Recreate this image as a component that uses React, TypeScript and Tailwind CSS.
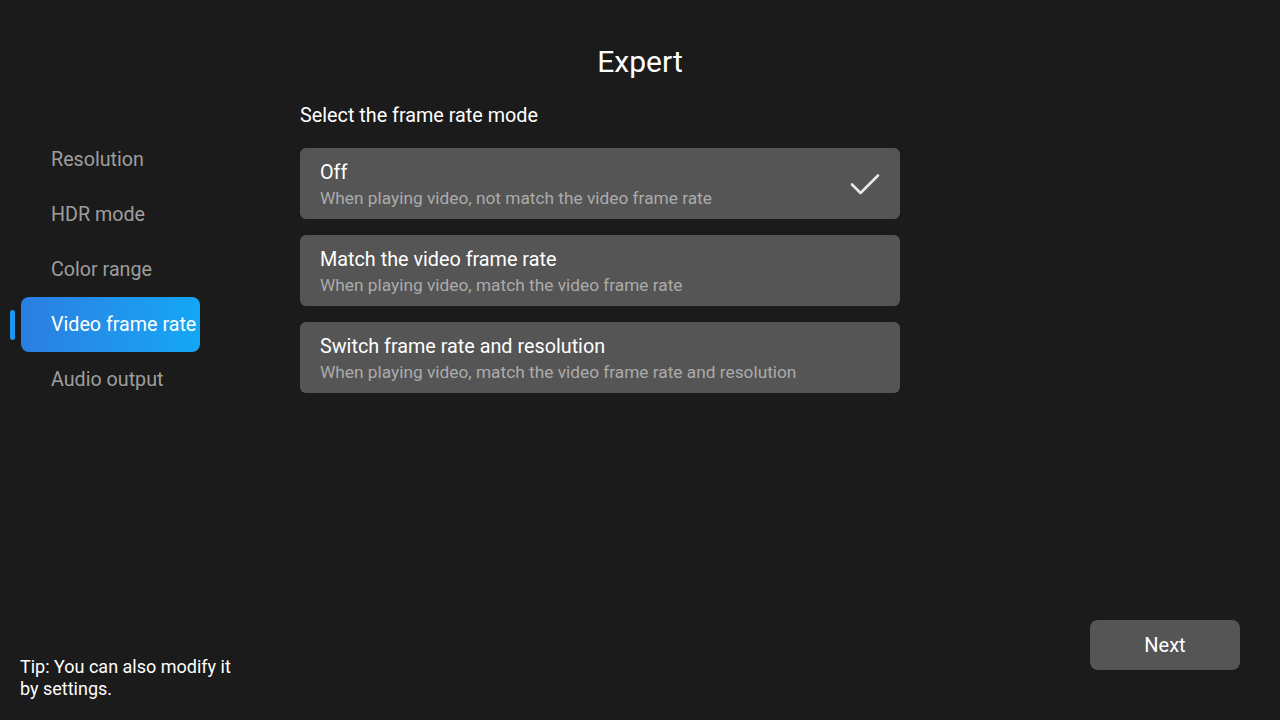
const navItems = ['Resolution', 'HDR mode', 'Color range', 'Video frame rate', 'Audio output'];

const options = [
  { title: 'Off', desc: 'When playing video, not match the video frame rate', checked: true },
  { title: 'Match the video frame rate', desc: 'When playing video, match the video frame rate', checked: false },
  { title: 'Switch frame rate and resolution', desc: 'When playing video, match the video frame rate and resolution', checked: false },
];

export default function App() {
  const active = 3;
  return (
    <div className="w-[1280px] h-[720px] bg-[#1b1b1b] flex flex-col overflow-hidden" style={{ fontFamily: 'Roboto, sans-serif' }}>
      {/* Title */}
      <h1 className="pt-[44px] text-center text-white text-[30px] leading-[36px] font-normal">Expert</h1>

      <div className="flex flex-1">
        {/* Left nav */}
        <div className="w-[300px] pt-[52px] flex flex-col">
          {navItems.map((item, i) => (
            <div key={item} className="flex items-center h-[55px]">
              <div className={`ml-[10px] w-[5px] h-[30px] rounded-full ${i === active ? 'bg-[#1e96ef]' : 'bg-transparent'}`}></div>
              <div
                className={`ml-[6px] w-[179px] h-[55px] rounded-[8px] pl-[30px] flex items-center text-[19.7px] ${
                  i === active ? 'bg-gradient-to-r from-[#2a7ee0] to-[#12a7f6] text-white' : 'text-[#9e9e9e]'
                }`}
              >
                {item}
              </div>
            </div>
          ))}
        </div>

        {/* Content */}
        <div className="pt-[24px] w-[600px]">
          <p className="text-white text-[19.8px] leading-[24px]">Select the frame rate mode</p>
          <div className="mt-[20px] flex flex-col gap-[16px]">
            {options.map((o) => (
              <div key={o.title} className="h-[71px] rounded-[6px] bg-[#555555] pl-[20px] pr-[20px] flex items-center justify-between">
                <div className="flex flex-col pt-[4px]">
                  <span className="text-white text-[19.8px] leading-[25px]">{o.title}</span>
                  <span className="text-[#ababab] text-[17.3px] leading-[26px]">{o.desc}</span>
                </div>
                {o.checked && (
                  <svg width="30" height="22" viewBox="0 0 30 22" fill="none" stroke="#e6e6e6" strokeWidth="2.6" strokeLinecap="round" strokeLinejoin="round">
                    <path d="M2 11.5l8.5 8.5L28 2.5" />
                  </svg>
                )}
              </div>
            ))}
          </div>
        </div>
      </div>

      {/* Footer */}
      <div className="flex justify-between items-end pl-[20px] pr-[40px]">
        <p className="text-white text-[18px] leading-[22px] w-[225px] pb-[20px]">Tip: You can also modify it by settings.</p>
        <button className="mb-[50px] w-[150px] h-[50px] rounded-[8px] bg-[#555555] text-white text-[20px]">Next</button>
      </div>
    </div>
  );
}
